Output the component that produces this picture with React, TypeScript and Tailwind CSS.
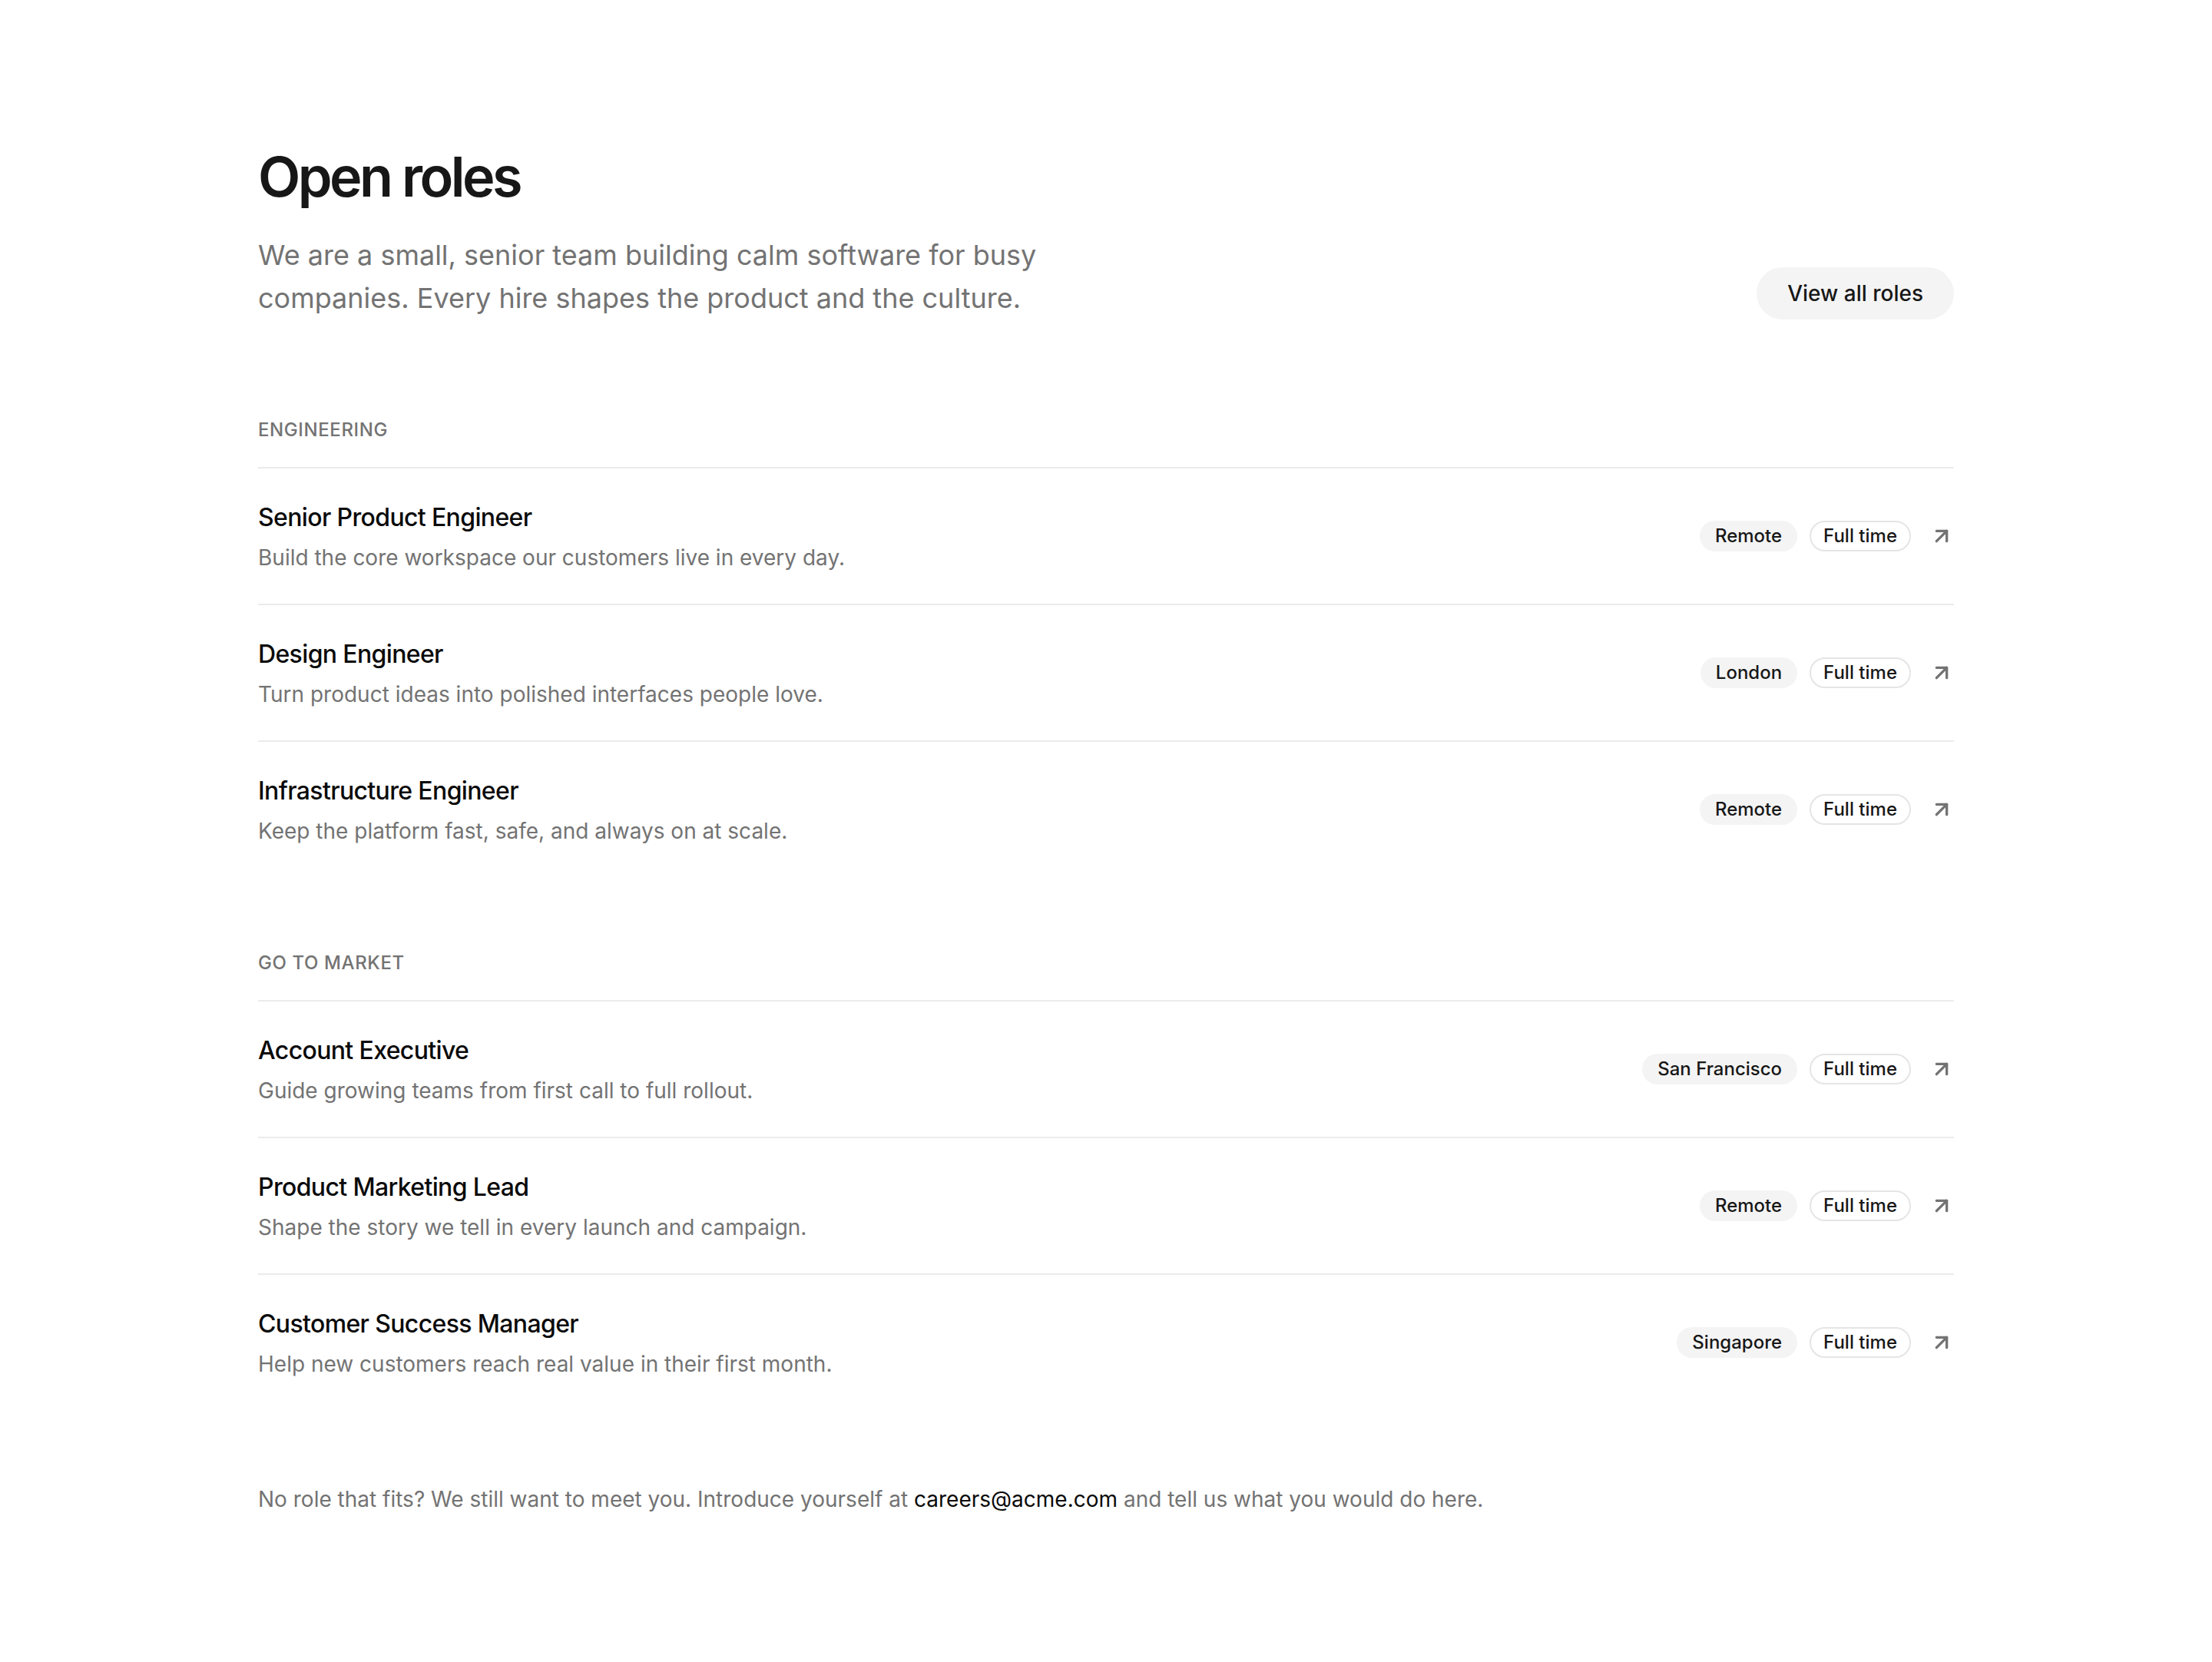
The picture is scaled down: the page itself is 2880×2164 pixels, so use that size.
import { ArrowUpRight } from 'lucide-react'

type Role = {
  title: string
  summary: string
  location: string
  type: string
}

const sections: { name: string; roles: Role[] }[] = [
  {
    name: 'Engineering',
    roles: [
      { title: 'Senior Product Engineer', summary: 'Build the core workspace our customers live in every day.', location: 'Remote', type: 'Full time' },
      { title: 'Design Engineer', summary: 'Turn product ideas into polished interfaces people love.', location: 'London', type: 'Full time' },
      { title: 'Infrastructure Engineer', summary: 'Keep the platform fast, safe, and always on at scale.', location: 'Remote', type: 'Full time' },
    ],
  },
  {
    name: 'Go to market',
    roles: [
      { title: 'Account Executive', summary: 'Guide growing teams from first call to full rollout.', location: 'San Francisco', type: 'Full time' },
      { title: 'Product Marketing Lead', summary: 'Shape the story we tell in every launch and campaign.', location: 'Remote', type: 'Full time' },
      { title: 'Customer Success Manager', summary: 'Help new customers reach real value in their first month.', location: 'Singapore', type: 'Full time' },
    ],
  },
]

const RoleRow = ({ role }: { role: Role }) => (
  <li className="flex items-center justify-between py-[40px]">
    <div>
      <h3 className="text-[32px] leading-[48px] font-medium tracking-[-0.02em] text-[#0a0a0a]">{role.title}</h3>
      <p className="mt-[8px] text-[28px] leading-[40px] text-[#737373]">{role.summary}</p>
    </div>
    <div className="flex items-center gap-[24px]">
      <div className="flex items-center gap-[16px]">
        <span className="rounded-full bg-[#f4f4f4] px-[20px] py-[4px] text-[24px] leading-[32px] font-medium text-[#171717]">
          {role.location}
        </span>
        <span className="rounded-full border-2 border-[#e5e5e5] bg-white px-[16px] py-[2px] text-[24px] leading-[32px] font-medium text-[#171717]">
          {role.type}
        </span>
      </div>
      <ArrowUpRight size={32} strokeWidth={2.5} className="text-[#737373]" />
    </div>
  </li>
)

export default function App() {
  return (
    <div className="min-h-screen bg-white font-['Inter','Noto_Sans',sans-serif] antialiased">
      <main className="mx-auto max-w-[2304px] px-[48px] pt-[190px] pb-[192px]">
        <header className="flex items-end justify-between">
          <div>
            <h1 className="text-[72px] leading-[80px] font-semibold tracking-[-0.05em] text-[#171717]">Open roles</h1>
            <p className="mt-[34px] max-w-[1152px] text-[36px] leading-[56px] text-[#737373]">
              We are a small, senior team building calm software for busy companies. Every hire shapes the product and the culture.
            </p>
          </div>
          <button className="h-[68px] rounded-full bg-[#f4f4f4] px-[40px] text-[28px] font-medium text-[#171717]">
            View all roles
          </button>
        </header>

        <div className="mt-[128px] flex flex-col gap-[96px]">
          {sections.map((section) => (
            <section key={section.name}>
              <h2 className="text-[24px] leading-[32px] font-medium uppercase tracking-wide text-[#737373]">
                {section.name}
              </h2>
              <ul className="mt-[32px] border-t-2 border-[#ebebeb] divide-y-2 divide-[#ebebeb]">
                {section.roles.map((role) => (
                  <RoleRow key={role.title} role={role} />
                ))}
              </ul>
            </section>
          ))}
        </div>

        <p className="mt-[96px] text-[28px] leading-[40px] text-[#737373]">
          No role that fits? We still want to meet you. Introduce yourself at{' '}
          <a href="#" className="text-[#0a0a0a]">careers@acme.com</a> and tell us what you would do here.
        </p>
      </main>
    </div>
  )
}
